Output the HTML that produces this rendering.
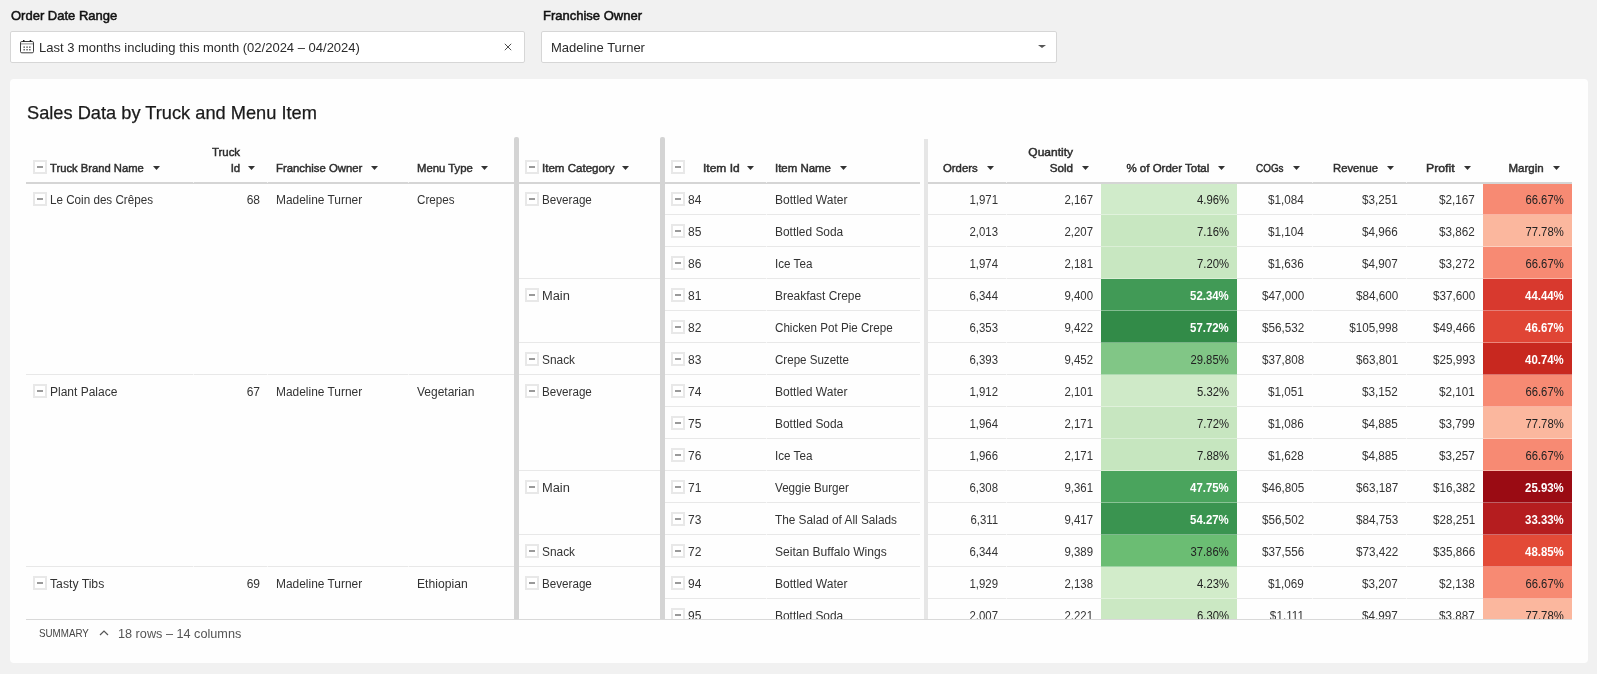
<!DOCTYPE html><html><head><meta charset="utf-8"><style>
*{box-sizing:border-box}
html,body{margin:0;padding:0}
body{width:1597px;height:674px;overflow:hidden;background:#f1f1f1;position:relative;font-family:"Liberation Sans",sans-serif;color:#333}
.a{position:absolute;white-space:nowrap}
.lbl{font-size:13px;font-weight:400;color:#111;-webkit-text-stroke:0.5px #111;line-height:16px}
.inp{position:absolute;background:#fff;border:1px solid #d6d6d6;border-radius:2px}
.card{position:absolute;left:10px;top:79px;width:1578px;height:584px;background:#fefefe;border-radius:4px}
.title{font-size:19px;transform:scaleX(0.96);transform-origin:0 0;color:#1a1a1a;-webkit-text-stroke:0.25px #1a1a1a;line-height:20px}
.hd{font-size:11px;font-weight:400;color:#2e2e2e;-webkit-text-stroke:0.45px #2e2e2e;line-height:14px}
.td{font-size:12px;color:#333;line-height:14px}
.num{transform-origin:100% 50%}
.bx{position:absolute;width:14px;height:14px;border:2px solid #e8e8e8;background:#fff}
.bx:after{content:"";position:absolute;left:2px;top:4px;width:6px;height:2px;background:#9a9a9a}
.arr{position:absolute;width:0;height:0;border-left:3.5px solid transparent;border-right:3.5px solid transparent;border-top:4px solid #333}
.ln{position:absolute;height:1px;background:#e8e8e8}
.cl{position:absolute}
</style></head><body><div id="w" style="position:absolute;left:0;top:0;width:1597px;height:674px;will-change:transform">
<div class="a lbl" style="left:11px;top:8px;">Order Date Range</div>
<div class="inp" style="left:10px;top:31px;width:515px;height:32px"></div>
<svg class="a" style="left:20px;top:40px" width="14" height="14" viewBox="0 0 14 14"><rect x="0.5" y="1.5" width="13" height="11.3" rx="1.3" fill="none" stroke="#333" stroke-width="0.95"/><rect x="1" y="3" width="12" height="1.6" fill="#b8b8b8"/><rect x="3" y="0" width="1.5" height="2" fill="#222"/><rect x="9.7" y="0" width="1.5" height="2" fill="#222"/><rect x="3.5" y="6.5" width="1.3" height="1.3" fill="#333"/><rect x="6.4" y="6.5" width="1.3" height="1.3" fill="#333"/><rect x="9.2" y="6.5" width="1.3" height="1.3" fill="#333"/><rect x="3.5" y="9.1" width="1.3" height="1.3" fill="#333"/><rect x="6.4" y="9.1" width="1.3" height="1.3" fill="#333"/><rect x="9.2" y="9.1" width="1.3" height="1.3" fill="#333"/></svg>
<div class="a" style="left:39px;top:40px;font-size:13px;line-height:15px;color:#2b2b2b">Last 3 months including this month (02/2024 – 04/2024)</div>
<svg class="a" style="left:504px;top:43px" width="8" height="8" viewBox="0 0 8 8"><path d="M0.8 0.8L7.2 7.2M7.2 0.8L0.8 7.2" stroke="#444" stroke-width="0.95"/></svg>
<div class="a lbl" style="left:543px;top:8px;">Franchise Owner</div>
<div class="inp" style="left:541px;top:31px;width:516px;height:32px"></div>
<div class="a" style="left:551px;top:40px;font-size:13px;line-height:15px;color:#2b2b2b">Madeline Turner</div>
<div class="arr" style="left:1038px;top:45px;border-left-width:4px;border-right-width:4px;border-top-width:3.5px;border-top-color:#555"></div>
<div class="card"></div>
<div class="a title" style="left:27px;top:103px">Sales Data by Truck and Menu Item</div>
<div class="bx" style="left:33px;top:160px"></div>
<div class="bx" style="left:525px;top:160px"></div>
<div class="bx" style="left:671px;top:160px"></div>
<div class="a hd" style="left:50px;top:161px;transform:scaleX(1.02);transform-origin:0 50%;">Truck Brand Name</div>
<svg class="a" style="left:153px;top:166px" width="7" height="4"><path d="M0 0H7L3.5 4Z" fill="#333"/></svg>
<div class="a hd" style="right:1357px;top:145px;transform:scaleX(1.04);transform-origin:100% 50%;">Truck</div>
<div class="a hd" style="right:1357px;top:161px;transform:scaleX(1.04);transform-origin:100% 50%;">Id</div>
<svg class="a" style="left:248px;top:166px" width="7" height="4"><path d="M0 0H7L3.5 4Z" fill="#333"/></svg>
<div class="a hd" style="left:276px;top:161px;transform:scaleX(1.03);transform-origin:0 50%;">Franchise Owner</div>
<svg class="a" style="left:371px;top:166px" width="7" height="4"><path d="M0 0H7L3.5 4Z" fill="#333"/></svg>
<div class="a hd" style="left:417px;top:161px;transform:scaleX(1.03);transform-origin:0 50%;">Menu Type</div>
<svg class="a" style="left:481px;top:166px" width="7" height="4"><path d="M0 0H7L3.5 4Z" fill="#333"/></svg>
<div class="a hd" style="left:542px;top:161px;transform:scaleX(1.05);transform-origin:0 50%;">Item Category</div>
<svg class="a" style="left:622px;top:166px" width="7" height="4"><path d="M0 0H7L3.5 4Z" fill="#333"/></svg>
<div class="a hd" style="left:703px;top:161px;transform:scaleX(1.09);transform-origin:0 50%;">Item Id</div>
<svg class="a" style="left:747px;top:166px" width="7" height="4"><path d="M0 0H7L3.5 4Z" fill="#333"/></svg>
<div class="a hd" style="left:775px;top:161px;transform:scaleX(1.04);transform-origin:0 50%;">Item Name</div>
<svg class="a" style="left:840px;top:166px" width="7" height="4"><path d="M0 0H7L3.5 4Z" fill="#333"/></svg>
<div class="a hd" style="right:619px;top:161px;transform:scaleX(1.03);transform-origin:100% 50%;">Orders</div>
<svg class="a" style="left:987px;top:166px" width="7" height="4"><path d="M0 0H7L3.5 4Z" fill="#333"/></svg>
<div class="a hd" style="right:524px;top:161px;transform:scaleX(1.06);transform-origin:100% 50%;">Sold</div>
<div class="a hd" style="right:524px;top:145px;transform:scaleX(1.09);transform-origin:100% 50%;">Quantity</div>
<svg class="a" style="left:1082px;top:166px" width="7" height="4"><path d="M0 0H7L3.5 4Z" fill="#333"/></svg>
<div class="a hd" style="right:388px;top:161px;transform:scaleX(1.045);transform-origin:100% 50%;">% of Order Total</div>
<svg class="a" style="left:1218px;top:166px" width="7" height="4"><path d="M0 0H7L3.5 4Z" fill="#333"/></svg>
<div class="a hd" style="right:313px;top:161px;transform:scaleX(0.9);transform-origin:100% 50%;">COGs</div>
<svg class="a" style="left:1293px;top:166px" width="7" height="4"><path d="M0 0H7L3.5 4Z" fill="#333"/></svg>
<div class="a hd" style="right:219px;top:161px;transform:scaleX(1.02);transform-origin:100% 50%;">Revenue</div>
<svg class="a" style="left:1387px;top:166px" width="7" height="4"><path d="M0 0H7L3.5 4Z" fill="#333"/></svg>
<div class="a hd" style="right:142px;top:161px;transform:scaleX(1.12);transform-origin:100% 50%;">Profit</div>
<svg class="a" style="left:1464px;top:166px" width="7" height="4"><path d="M0 0H7L3.5 4Z" fill="#333"/></svg>
<div class="a hd" style="right:53px;top:161px;transform:scaleX(1.045);transform-origin:100% 50%;">Margin</div>
<svg class="a" style="left:1553px;top:166px" width="7" height="4"><path d="M0 0H7L3.5 4Z" fill="#333"/></svg>
<div class="a" style="left:26px;top:182px;width:894px;height:2px;background:#d5d5d5"></div>
<div class="a" style="left:928px;top:182px;width:644px;height:2px;background:#d5d5d5"></div>
<div class="a" style="left:193px;top:182px;width:1px;height:1px;background:#efefef"></div>
<div class="a" style="left:267px;top:182px;width:1px;height:1px;background:#efefef"></div>
<div class="a" style="left:408px;top:182px;width:1px;height:1px;background:#efefef"></div>
<div class="a" style="left:766px;top:182px;width:1px;height:1px;background:#efefef"></div>
<div class="a" style="left:1006px;top:182px;width:1px;height:1px;background:#efefef"></div>
<div class="a" style="left:1312px;top:182px;width:1px;height:1px;background:#efefef"></div>
<div class="a" style="left:1406px;top:182px;width:1px;height:1px;background:#efefef"></div>
<div class="a" style="left:0;top:184px;width:1597px;height:435px;overflow:hidden">
<div class="cl" style="left:1101px;top:-1px;width:136px;height:32px;background:#d0ebca"></div>
<div class="cl" style="left:1483px;top:-1px;width:89px;height:32px;background:#f78a73"></div>
<div class="cl" style="left:1101px;top:31px;width:136px;height:32px;background:#c8e7c1"></div>
<div class="cl" style="left:1483px;top:31px;width:89px;height:32px;background:#fbb79e"></div>
<div class="cl" style="left:1101px;top:63px;width:136px;height:32px;background:#c8e7c1"></div>
<div class="cl" style="left:1483px;top:63px;width:89px;height:32px;background:#f78a73"></div>
<div class="cl" style="left:1101px;top:95px;width:136px;height:32px;background:#419a56"></div>
<div class="cl" style="left:1483px;top:95px;width:89px;height:32px;background:#d8392e"></div>
<div class="cl" style="left:1101px;top:127px;width:136px;height:32px;background:#328b48"></div>
<div class="cl" style="left:1483px;top:127px;width:89px;height:32px;background:#e04535"></div>
<div class="cl" style="left:1101px;top:159px;width:136px;height:32px;background:#81c686"></div>
<div class="cl" style="left:1483px;top:159px;width:89px;height:32px;background:#c8281f"></div>
<div class="cl" style="left:1101px;top:191px;width:136px;height:32px;background:#cfeac8"></div>
<div class="cl" style="left:1483px;top:191px;width:89px;height:32px;background:#f78a73"></div>
<div class="cl" style="left:1101px;top:223px;width:136px;height:32px;background:#c7e6c0"></div>
<div class="cl" style="left:1483px;top:223px;width:89px;height:32px;background:#fbb79e"></div>
<div class="cl" style="left:1101px;top:255px;width:136px;height:32px;background:#c6e6bf"></div>
<div class="cl" style="left:1483px;top:255px;width:89px;height:32px;background:#f78a73"></div>
<div class="cl" style="left:1101px;top:287px;width:136px;height:32px;background:#4aa45d"></div>
<div class="cl" style="left:1483px;top:287px;width:89px;height:32px;background:#9a0b13"></div>
<div class="cl" style="left:1101px;top:319px;width:136px;height:32px;background:#3a9450"></div>
<div class="cl" style="left:1483px;top:319px;width:89px;height:32px;background:#b51d1f"></div>
<div class="cl" style="left:1101px;top:351px;width:136px;height:32px;background:#6bbd73"></div>
<div class="cl" style="left:1483px;top:351px;width:89px;height:32px;background:#e34a37"></div>
<div class="cl" style="left:1101px;top:383px;width:136px;height:32px;background:#d2ecca"></div>
<div class="cl" style="left:1483px;top:383px;width:89px;height:32px;background:#f78a73"></div>
<div class="cl" style="left:1101px;top:415px;width:136px;height:32px;background:#cbe8c3"></div>
<div class="cl" style="left:1483px;top:415px;width:89px;height:32px;background:#fbb79e"></div>
<div class="ln" style="left:664px;top:30px;width:256px"></div>
<div class="ln" style="left:928px;top:30px;width:173px"></div>
<div class="ln" style="left:1101px;top:30px;width:136px;background:rgba(255,255,255,.35)"></div>
<div class="ln" style="left:1237px;top:30px;width:246px"></div>
<div class="ln" style="left:1483px;top:30px;width:89px;background:rgba(255,255,255,.35)"></div>
<div class="ln" style="left:664px;top:62px;width:256px"></div>
<div class="ln" style="left:928px;top:62px;width:173px"></div>
<div class="ln" style="left:1101px;top:62px;width:136px;background:rgba(255,255,255,.35)"></div>
<div class="ln" style="left:1237px;top:62px;width:246px"></div>
<div class="ln" style="left:1483px;top:62px;width:89px;background:rgba(255,255,255,.35)"></div>
<div class="ln" style="left:664px;top:94px;width:256px"></div>
<div class="ln" style="left:928px;top:94px;width:173px"></div>
<div class="ln" style="left:1101px;top:94px;width:136px;background:rgba(255,255,255,.35)"></div>
<div class="ln" style="left:1237px;top:94px;width:246px"></div>
<div class="ln" style="left:1483px;top:94px;width:89px;background:rgba(255,255,255,.35)"></div>
<div class="ln" style="left:664px;top:126px;width:256px"></div>
<div class="ln" style="left:928px;top:126px;width:173px"></div>
<div class="ln" style="left:1101px;top:126px;width:136px;background:rgba(255,255,255,.35)"></div>
<div class="ln" style="left:1237px;top:126px;width:246px"></div>
<div class="ln" style="left:1483px;top:126px;width:89px;background:rgba(255,255,255,.35)"></div>
<div class="ln" style="left:664px;top:158px;width:256px"></div>
<div class="ln" style="left:928px;top:158px;width:173px"></div>
<div class="ln" style="left:1101px;top:158px;width:136px;background:rgba(255,255,255,.35)"></div>
<div class="ln" style="left:1237px;top:158px;width:246px"></div>
<div class="ln" style="left:1483px;top:158px;width:89px;background:rgba(255,255,255,.35)"></div>
<div class="ln" style="left:664px;top:190px;width:256px"></div>
<div class="ln" style="left:928px;top:190px;width:173px"></div>
<div class="ln" style="left:1101px;top:190px;width:136px;background:rgba(255,255,255,.35)"></div>
<div class="ln" style="left:1237px;top:190px;width:246px"></div>
<div class="ln" style="left:1483px;top:190px;width:89px;background:rgba(255,255,255,.35)"></div>
<div class="ln" style="left:664px;top:222px;width:256px"></div>
<div class="ln" style="left:928px;top:222px;width:173px"></div>
<div class="ln" style="left:1101px;top:222px;width:136px;background:rgba(255,255,255,.35)"></div>
<div class="ln" style="left:1237px;top:222px;width:246px"></div>
<div class="ln" style="left:1483px;top:222px;width:89px;background:rgba(255,255,255,.35)"></div>
<div class="ln" style="left:664px;top:254px;width:256px"></div>
<div class="ln" style="left:928px;top:254px;width:173px"></div>
<div class="ln" style="left:1101px;top:254px;width:136px;background:rgba(255,255,255,.35)"></div>
<div class="ln" style="left:1237px;top:254px;width:246px"></div>
<div class="ln" style="left:1483px;top:254px;width:89px;background:rgba(255,255,255,.35)"></div>
<div class="ln" style="left:664px;top:286px;width:256px"></div>
<div class="ln" style="left:928px;top:286px;width:173px"></div>
<div class="ln" style="left:1101px;top:286px;width:136px;background:rgba(255,255,255,.35)"></div>
<div class="ln" style="left:1237px;top:286px;width:246px"></div>
<div class="ln" style="left:1483px;top:286px;width:89px;background:rgba(255,255,255,.35)"></div>
<div class="ln" style="left:664px;top:318px;width:256px"></div>
<div class="ln" style="left:928px;top:318px;width:173px"></div>
<div class="ln" style="left:1101px;top:318px;width:136px;background:rgba(255,255,255,.35)"></div>
<div class="ln" style="left:1237px;top:318px;width:246px"></div>
<div class="ln" style="left:1483px;top:318px;width:89px;background:rgba(255,255,255,.35)"></div>
<div class="ln" style="left:664px;top:350px;width:256px"></div>
<div class="ln" style="left:928px;top:350px;width:173px"></div>
<div class="ln" style="left:1101px;top:350px;width:136px;background:rgba(255,255,255,.35)"></div>
<div class="ln" style="left:1237px;top:350px;width:246px"></div>
<div class="ln" style="left:1483px;top:350px;width:89px;background:rgba(255,255,255,.35)"></div>
<div class="ln" style="left:664px;top:382px;width:256px"></div>
<div class="ln" style="left:928px;top:382px;width:173px"></div>
<div class="ln" style="left:1101px;top:382px;width:136px;background:rgba(255,255,255,.35)"></div>
<div class="ln" style="left:1237px;top:382px;width:246px"></div>
<div class="ln" style="left:1483px;top:382px;width:89px;background:rgba(255,255,255,.35)"></div>
<div class="ln" style="left:664px;top:414px;width:256px"></div>
<div class="ln" style="left:928px;top:414px;width:173px"></div>
<div class="ln" style="left:1101px;top:414px;width:136px;background:rgba(255,255,255,.35)"></div>
<div class="ln" style="left:1237px;top:414px;width:246px"></div>
<div class="ln" style="left:1483px;top:414px;width:89px;background:rgba(255,255,255,.35)"></div>
<div class="ln" style="left:766px;top:30px;width:1px;background:#f6f6f6"></div>
<div class="ln" style="left:1006px;top:30px;width:1px;background:#f6f6f6"></div>
<div class="ln" style="left:1312px;top:30px;width:1px;background:#f6f6f6"></div>
<div class="ln" style="left:1406px;top:30px;width:1px;background:#f6f6f6"></div>
<div class="ln" style="left:766px;top:62px;width:1px;background:#f6f6f6"></div>
<div class="ln" style="left:1006px;top:62px;width:1px;background:#f6f6f6"></div>
<div class="ln" style="left:1312px;top:62px;width:1px;background:#f6f6f6"></div>
<div class="ln" style="left:1406px;top:62px;width:1px;background:#f6f6f6"></div>
<div class="ln" style="left:766px;top:94px;width:1px;background:#f6f6f6"></div>
<div class="ln" style="left:1006px;top:94px;width:1px;background:#f6f6f6"></div>
<div class="ln" style="left:1312px;top:94px;width:1px;background:#f6f6f6"></div>
<div class="ln" style="left:1406px;top:94px;width:1px;background:#f6f6f6"></div>
<div class="ln" style="left:766px;top:126px;width:1px;background:#f6f6f6"></div>
<div class="ln" style="left:1006px;top:126px;width:1px;background:#f6f6f6"></div>
<div class="ln" style="left:1312px;top:126px;width:1px;background:#f6f6f6"></div>
<div class="ln" style="left:1406px;top:126px;width:1px;background:#f6f6f6"></div>
<div class="ln" style="left:766px;top:158px;width:1px;background:#f6f6f6"></div>
<div class="ln" style="left:1006px;top:158px;width:1px;background:#f6f6f6"></div>
<div class="ln" style="left:1312px;top:158px;width:1px;background:#f6f6f6"></div>
<div class="ln" style="left:1406px;top:158px;width:1px;background:#f6f6f6"></div>
<div class="ln" style="left:766px;top:190px;width:1px;background:#f6f6f6"></div>
<div class="ln" style="left:1006px;top:190px;width:1px;background:#f6f6f6"></div>
<div class="ln" style="left:1312px;top:190px;width:1px;background:#f6f6f6"></div>
<div class="ln" style="left:1406px;top:190px;width:1px;background:#f6f6f6"></div>
<div class="ln" style="left:766px;top:222px;width:1px;background:#f6f6f6"></div>
<div class="ln" style="left:1006px;top:222px;width:1px;background:#f6f6f6"></div>
<div class="ln" style="left:1312px;top:222px;width:1px;background:#f6f6f6"></div>
<div class="ln" style="left:1406px;top:222px;width:1px;background:#f6f6f6"></div>
<div class="ln" style="left:766px;top:254px;width:1px;background:#f6f6f6"></div>
<div class="ln" style="left:1006px;top:254px;width:1px;background:#f6f6f6"></div>
<div class="ln" style="left:1312px;top:254px;width:1px;background:#f6f6f6"></div>
<div class="ln" style="left:1406px;top:254px;width:1px;background:#f6f6f6"></div>
<div class="ln" style="left:766px;top:286px;width:1px;background:#f6f6f6"></div>
<div class="ln" style="left:1006px;top:286px;width:1px;background:#f6f6f6"></div>
<div class="ln" style="left:1312px;top:286px;width:1px;background:#f6f6f6"></div>
<div class="ln" style="left:1406px;top:286px;width:1px;background:#f6f6f6"></div>
<div class="ln" style="left:766px;top:318px;width:1px;background:#f6f6f6"></div>
<div class="ln" style="left:1006px;top:318px;width:1px;background:#f6f6f6"></div>
<div class="ln" style="left:1312px;top:318px;width:1px;background:#f6f6f6"></div>
<div class="ln" style="left:1406px;top:318px;width:1px;background:#f6f6f6"></div>
<div class="ln" style="left:766px;top:350px;width:1px;background:#f6f6f6"></div>
<div class="ln" style="left:1006px;top:350px;width:1px;background:#f6f6f6"></div>
<div class="ln" style="left:1312px;top:350px;width:1px;background:#f6f6f6"></div>
<div class="ln" style="left:1406px;top:350px;width:1px;background:#f6f6f6"></div>
<div class="ln" style="left:766px;top:382px;width:1px;background:#f6f6f6"></div>
<div class="ln" style="left:1006px;top:382px;width:1px;background:#f6f6f6"></div>
<div class="ln" style="left:1312px;top:382px;width:1px;background:#f6f6f6"></div>
<div class="ln" style="left:1406px;top:382px;width:1px;background:#f6f6f6"></div>
<div class="ln" style="left:766px;top:414px;width:1px;background:#f6f6f6"></div>
<div class="ln" style="left:1006px;top:414px;width:1px;background:#f6f6f6"></div>
<div class="ln" style="left:1312px;top:414px;width:1px;background:#f6f6f6"></div>
<div class="ln" style="left:1406px;top:414px;width:1px;background:#f6f6f6"></div>
<div class="ln" style="left:26px;top:190px;width:488px"></div>
<div class="ln" style="left:193px;top:190px;width:1px;background:#f6f6f6"></div>
<div class="ln" style="left:267px;top:190px;width:1px;background:#f6f6f6"></div>
<div class="ln" style="left:408px;top:190px;width:1px;background:#f6f6f6"></div>
<div class="ln" style="left:26px;top:382px;width:488px"></div>
<div class="ln" style="left:193px;top:382px;width:1px;background:#f6f6f6"></div>
<div class="ln" style="left:267px;top:382px;width:1px;background:#f6f6f6"></div>
<div class="ln" style="left:408px;top:382px;width:1px;background:#f6f6f6"></div>
<div class="ln" style="left:518px;top:94px;width:142px"></div>
<div class="ln" style="left:518px;top:158px;width:142px"></div>
<div class="ln" style="left:518px;top:190px;width:142px"></div>
<div class="ln" style="left:518px;top:286px;width:142px"></div>
<div class="ln" style="left:518px;top:350px;width:142px"></div>
<div class="ln" style="left:518px;top:382px;width:142px"></div>
<div class="bx" style="left:33px;top:8px"></div>
<div class="a td" style="left:50px;top:8.5px;transform:scaleX(0.971);transform-origin:0 50%;">Le Coin des Crêpes</div>
<div class="a td" style="right:1337px;top:8.5px;">68</div>
<div class="a td" style="left:276px;top:8.5px;transform:scaleX(0.994);transform-origin:0 50%;">Madeline Turner</div>
<div class="a td" style="left:417px;top:8.5px;transform:scaleX(0.968);transform-origin:0 50%;">Crepes</div>
<div class="bx" style="left:525px;top:8px"></div>
<div class="a td" style="left:542px;top:8.5px;transform:scaleX(0.97);transform-origin:0 50%;">Beverage</div>
<div class="bx" style="left:671px;top:8px"></div>
<div class="a td" style="left:688px;top:8.5px;">84</div>
<div class="a td" style="left:775px;top:8.5px;transform:scaleX(1.004);transform-origin:0 50%;">Bottled Water</div>
<div class="a td" style="right:599px;top:8.5px;transform:scaleX(0.95);transform-origin:100% 50%;">1,971</div>
<div class="a td" style="right:504px;top:8.5px;transform:scaleX(0.95);transform-origin:100% 50%;">2,167</div>
<div class="a td" style="right:368px;top:8.5px;color:#222;transform:scaleX(0.94);transform-origin:100% 50%;">4.96%</div>
<div class="a td" style="right:293px;top:8.5px;transform:scaleX(0.975);transform-origin:100% 50%;">$1,084</div>
<div class="a td" style="right:199px;top:8.5px;transform:scaleX(0.975);transform-origin:100% 50%;">$3,251</div>
<div class="a td" style="right:122px;top:8.5px;transform:scaleX(0.975);transform-origin:100% 50%;">$2,167</div>
<div class="a td" style="right:33px;top:8.5px;color:#222;transform:scaleX(0.94);transform-origin:100% 50%;">66.67%</div>
<div class="bx" style="left:671px;top:40px"></div>
<div class="a td" style="left:688px;top:40.5px;">85</div>
<div class="a td" style="left:775px;top:40.5px;transform:scaleX(0.993);transform-origin:0 50%;">Bottled Soda</div>
<div class="a td" style="right:599px;top:40.5px;transform:scaleX(0.95);transform-origin:100% 50%;">2,013</div>
<div class="a td" style="right:504px;top:40.5px;transform:scaleX(0.95);transform-origin:100% 50%;">2,207</div>
<div class="a td" style="right:368px;top:40.5px;color:#222;transform:scaleX(0.94);transform-origin:100% 50%;">7.16%</div>
<div class="a td" style="right:293px;top:40.5px;transform:scaleX(0.975);transform-origin:100% 50%;">$1,104</div>
<div class="a td" style="right:199px;top:40.5px;transform:scaleX(0.975);transform-origin:100% 50%;">$4,966</div>
<div class="a td" style="right:122px;top:40.5px;transform:scaleX(0.975);transform-origin:100% 50%;">$3,862</div>
<div class="a td" style="right:33px;top:40.5px;color:#222;transform:scaleX(0.94);transform-origin:100% 50%;">77.78%</div>
<div class="bx" style="left:671px;top:72px"></div>
<div class="a td" style="left:688px;top:72.5px;">86</div>
<div class="a td" style="left:775px;top:72.5px;transform:scaleX(0.971);transform-origin:0 50%;">Ice Tea</div>
<div class="a td" style="right:599px;top:72.5px;transform:scaleX(0.95);transform-origin:100% 50%;">1,974</div>
<div class="a td" style="right:504px;top:72.5px;transform:scaleX(0.95);transform-origin:100% 50%;">2,181</div>
<div class="a td" style="right:368px;top:72.5px;color:#222;transform:scaleX(0.94);transform-origin:100% 50%;">7.20%</div>
<div class="a td" style="right:293px;top:72.5px;transform:scaleX(0.975);transform-origin:100% 50%;">$1,636</div>
<div class="a td" style="right:199px;top:72.5px;transform:scaleX(0.975);transform-origin:100% 50%;">$4,907</div>
<div class="a td" style="right:122px;top:72.5px;transform:scaleX(0.975);transform-origin:100% 50%;">$3,272</div>
<div class="a td" style="right:33px;top:72.5px;color:#222;transform:scaleX(0.94);transform-origin:100% 50%;">66.67%</div>
<div class="bx" style="left:525px;top:104px"></div>
<div class="a td" style="left:542px;top:104.5px;transform:scaleX(1.071);transform-origin:0 50%;">Main</div>
<div class="bx" style="left:671px;top:104px"></div>
<div class="a td" style="left:688px;top:104.5px;">81</div>
<div class="a td" style="left:775px;top:104.5px;transform:scaleX(0.993);transform-origin:0 50%;">Breakfast Crepe</div>
<div class="a td" style="right:599px;top:104.5px;transform:scaleX(0.95);transform-origin:100% 50%;">6,344</div>
<div class="a td" style="right:504px;top:104.5px;transform:scaleX(0.95);transform-origin:100% 50%;">9,400</div>
<div class="a td" style="right:368px;top:104.5px;color:#fff;font-weight:700;transform:scaleX(0.95);transform-origin:100% 50%;">52.34%</div>
<div class="a td" style="right:293px;top:104.5px;transform:scaleX(0.975);transform-origin:100% 50%;">$47,000</div>
<div class="a td" style="right:199px;top:104.5px;transform:scaleX(0.975);transform-origin:100% 50%;">$84,600</div>
<div class="a td" style="right:122px;top:104.5px;transform:scaleX(0.975);transform-origin:100% 50%;">$37,600</div>
<div class="a td" style="right:33px;top:104.5px;color:#fff;font-weight:700;transform:scaleX(0.95);transform-origin:100% 50%;">44.44%</div>
<div class="bx" style="left:671px;top:136px"></div>
<div class="a td" style="left:688px;top:136.5px;">82</div>
<div class="a td" style="left:775px;top:136.5px;transform:scaleX(0.969);transform-origin:0 50%;">Chicken Pot Pie Crepe</div>
<div class="a td" style="right:599px;top:136.5px;transform:scaleX(0.95);transform-origin:100% 50%;">6,353</div>
<div class="a td" style="right:504px;top:136.5px;transform:scaleX(0.95);transform-origin:100% 50%;">9,422</div>
<div class="a td" style="right:368px;top:136.5px;color:#fff;font-weight:700;transform:scaleX(0.95);transform-origin:100% 50%;">57.72%</div>
<div class="a td" style="right:293px;top:136.5px;transform:scaleX(0.975);transform-origin:100% 50%;">$56,532</div>
<div class="a td" style="right:199px;top:136.5px;transform:scaleX(0.975);transform-origin:100% 50%;">$105,998</div>
<div class="a td" style="right:122px;top:136.5px;transform:scaleX(0.975);transform-origin:100% 50%;">$49,466</div>
<div class="a td" style="right:33px;top:136.5px;color:#fff;font-weight:700;transform:scaleX(0.95);transform-origin:100% 50%;">46.67%</div>
<div class="bx" style="left:525px;top:168px"></div>
<div class="a td" style="left:542px;top:168.5px;transform:scaleX(0.991);transform-origin:0 50%;">Snack</div>
<div class="bx" style="left:671px;top:168px"></div>
<div class="a td" style="left:688px;top:168.5px;">83</div>
<div class="a td" style="left:775px;top:168.5px;transform:scaleX(0.964);transform-origin:0 50%;">Crepe Suzette</div>
<div class="a td" style="right:599px;top:168.5px;transform:scaleX(0.95);transform-origin:100% 50%;">6,393</div>
<div class="a td" style="right:504px;top:168.5px;transform:scaleX(0.95);transform-origin:100% 50%;">9,452</div>
<div class="a td" style="right:368px;top:168.5px;color:#222;transform:scaleX(0.94);transform-origin:100% 50%;">29.85%</div>
<div class="a td" style="right:293px;top:168.5px;transform:scaleX(0.975);transform-origin:100% 50%;">$37,808</div>
<div class="a td" style="right:199px;top:168.5px;transform:scaleX(0.975);transform-origin:100% 50%;">$63,801</div>
<div class="a td" style="right:122px;top:168.5px;transform:scaleX(0.975);transform-origin:100% 50%;">$25,993</div>
<div class="a td" style="right:33px;top:168.5px;color:#fff;font-weight:700;transform:scaleX(0.95);transform-origin:100% 50%;">40.74%</div>
<div class="bx" style="left:33px;top:200px"></div>
<div class="a td" style="left:50px;top:200.5px;transform:scaleX(1.0);transform-origin:0 50%;">Plant Palace</div>
<div class="a td" style="right:1337px;top:200.5px;">67</div>
<div class="a td" style="left:276px;top:200.5px;transform:scaleX(0.994);transform-origin:0 50%;">Madeline Turner</div>
<div class="a td" style="left:417px;top:200.5px;transform:scaleX(1.0);transform-origin:0 50%;">Vegetarian</div>
<div class="bx" style="left:525px;top:200px"></div>
<div class="a td" style="left:542px;top:200.5px;transform:scaleX(0.97);transform-origin:0 50%;">Beverage</div>
<div class="bx" style="left:671px;top:200px"></div>
<div class="a td" style="left:688px;top:200.5px;">74</div>
<div class="a td" style="left:775px;top:200.5px;transform:scaleX(1.004);transform-origin:0 50%;">Bottled Water</div>
<div class="a td" style="right:599px;top:200.5px;transform:scaleX(0.95);transform-origin:100% 50%;">1,912</div>
<div class="a td" style="right:504px;top:200.5px;transform:scaleX(0.95);transform-origin:100% 50%;">2,101</div>
<div class="a td" style="right:368px;top:200.5px;color:#222;transform:scaleX(0.94);transform-origin:100% 50%;">5.32%</div>
<div class="a td" style="right:293px;top:200.5px;transform:scaleX(0.975);transform-origin:100% 50%;">$1,051</div>
<div class="a td" style="right:199px;top:200.5px;transform:scaleX(0.975);transform-origin:100% 50%;">$3,152</div>
<div class="a td" style="right:122px;top:200.5px;transform:scaleX(0.975);transform-origin:100% 50%;">$2,101</div>
<div class="a td" style="right:33px;top:200.5px;color:#222;transform:scaleX(0.94);transform-origin:100% 50%;">66.67%</div>
<div class="bx" style="left:671px;top:232px"></div>
<div class="a td" style="left:688px;top:232.5px;">75</div>
<div class="a td" style="left:775px;top:232.5px;transform:scaleX(0.993);transform-origin:0 50%;">Bottled Soda</div>
<div class="a td" style="right:599px;top:232.5px;transform:scaleX(0.95);transform-origin:100% 50%;">1,964</div>
<div class="a td" style="right:504px;top:232.5px;transform:scaleX(0.95);transform-origin:100% 50%;">2,171</div>
<div class="a td" style="right:368px;top:232.5px;color:#222;transform:scaleX(0.94);transform-origin:100% 50%;">7.72%</div>
<div class="a td" style="right:293px;top:232.5px;transform:scaleX(0.975);transform-origin:100% 50%;">$1,086</div>
<div class="a td" style="right:199px;top:232.5px;transform:scaleX(0.975);transform-origin:100% 50%;">$4,885</div>
<div class="a td" style="right:122px;top:232.5px;transform:scaleX(0.975);transform-origin:100% 50%;">$3,799</div>
<div class="a td" style="right:33px;top:232.5px;color:#222;transform:scaleX(0.94);transform-origin:100% 50%;">77.78%</div>
<div class="bx" style="left:671px;top:264px"></div>
<div class="a td" style="left:688px;top:264.5px;">76</div>
<div class="a td" style="left:775px;top:264.5px;transform:scaleX(0.971);transform-origin:0 50%;">Ice Tea</div>
<div class="a td" style="right:599px;top:264.5px;transform:scaleX(0.95);transform-origin:100% 50%;">1,966</div>
<div class="a td" style="right:504px;top:264.5px;transform:scaleX(0.95);transform-origin:100% 50%;">2,171</div>
<div class="a td" style="right:368px;top:264.5px;color:#222;transform:scaleX(0.94);transform-origin:100% 50%;">7.88%</div>
<div class="a td" style="right:293px;top:264.5px;transform:scaleX(0.975);transform-origin:100% 50%;">$1,628</div>
<div class="a td" style="right:199px;top:264.5px;transform:scaleX(0.975);transform-origin:100% 50%;">$4,885</div>
<div class="a td" style="right:122px;top:264.5px;transform:scaleX(0.975);transform-origin:100% 50%;">$3,257</div>
<div class="a td" style="right:33px;top:264.5px;color:#222;transform:scaleX(0.94);transform-origin:100% 50%;">66.67%</div>
<div class="bx" style="left:525px;top:296px"></div>
<div class="a td" style="left:542px;top:296.5px;transform:scaleX(1.071);transform-origin:0 50%;">Main</div>
<div class="bx" style="left:671px;top:296px"></div>
<div class="a td" style="left:688px;top:296.5px;">71</div>
<div class="a td" style="left:775px;top:296.5px;transform:scaleX(0.972);transform-origin:0 50%;">Veggie Burger</div>
<div class="a td" style="right:599px;top:296.5px;transform:scaleX(0.95);transform-origin:100% 50%;">6,308</div>
<div class="a td" style="right:504px;top:296.5px;transform:scaleX(0.95);transform-origin:100% 50%;">9,361</div>
<div class="a td" style="right:368px;top:296.5px;color:#fff;font-weight:700;transform:scaleX(0.95);transform-origin:100% 50%;">47.75%</div>
<div class="a td" style="right:293px;top:296.5px;transform:scaleX(0.975);transform-origin:100% 50%;">$46,805</div>
<div class="a td" style="right:199px;top:296.5px;transform:scaleX(0.975);transform-origin:100% 50%;">$63,187</div>
<div class="a td" style="right:122px;top:296.5px;transform:scaleX(0.975);transform-origin:100% 50%;">$16,382</div>
<div class="a td" style="right:33px;top:296.5px;color:#fff;font-weight:700;transform:scaleX(0.95);transform-origin:100% 50%;">25.93%</div>
<div class="bx" style="left:671px;top:328px"></div>
<div class="a td" style="left:688px;top:328.5px;">73</div>
<div class="a td" style="left:775px;top:328.5px;transform:scaleX(0.983);transform-origin:0 50%;">The Salad of All Salads</div>
<div class="a td" style="right:599px;top:328.5px;transform:scaleX(0.95);transform-origin:100% 50%;">6,311</div>
<div class="a td" style="right:504px;top:328.5px;transform:scaleX(0.95);transform-origin:100% 50%;">9,417</div>
<div class="a td" style="right:368px;top:328.5px;color:#fff;font-weight:700;transform:scaleX(0.95);transform-origin:100% 50%;">54.27%</div>
<div class="a td" style="right:293px;top:328.5px;transform:scaleX(0.975);transform-origin:100% 50%;">$56,502</div>
<div class="a td" style="right:199px;top:328.5px;transform:scaleX(0.975);transform-origin:100% 50%;">$84,753</div>
<div class="a td" style="right:122px;top:328.5px;transform:scaleX(0.975);transform-origin:100% 50%;">$28,251</div>
<div class="a td" style="right:33px;top:328.5px;color:#fff;font-weight:700;transform:scaleX(0.95);transform-origin:100% 50%;">33.33%</div>
<div class="bx" style="left:525px;top:360px"></div>
<div class="a td" style="left:542px;top:360.5px;transform:scaleX(0.991);transform-origin:0 50%;">Snack</div>
<div class="bx" style="left:671px;top:360px"></div>
<div class="a td" style="left:688px;top:360.5px;">72</div>
<div class="a td" style="left:775px;top:360.5px;transform:scaleX(1.005);transform-origin:0 50%;">Seitan Buffalo Wings</div>
<div class="a td" style="right:599px;top:360.5px;transform:scaleX(0.95);transform-origin:100% 50%;">6,344</div>
<div class="a td" style="right:504px;top:360.5px;transform:scaleX(0.95);transform-origin:100% 50%;">9,389</div>
<div class="a td" style="right:368px;top:360.5px;color:#222;transform:scaleX(0.94);transform-origin:100% 50%;">37.86%</div>
<div class="a td" style="right:293px;top:360.5px;transform:scaleX(0.975);transform-origin:100% 50%;">$37,556</div>
<div class="a td" style="right:199px;top:360.5px;transform:scaleX(0.975);transform-origin:100% 50%;">$73,422</div>
<div class="a td" style="right:122px;top:360.5px;transform:scaleX(0.975);transform-origin:100% 50%;">$35,866</div>
<div class="a td" style="right:33px;top:360.5px;color:#fff;font-weight:700;transform:scaleX(0.95);transform-origin:100% 50%;">48.85%</div>
<div class="bx" style="left:33px;top:392px"></div>
<div class="a td" style="left:50px;top:392.5px;transform:scaleX(1.017);transform-origin:0 50%;">Tasty Tibs</div>
<div class="a td" style="right:1337px;top:392.5px;">69</div>
<div class="a td" style="left:276px;top:392.5px;transform:scaleX(0.994);transform-origin:0 50%;">Madeline Turner</div>
<div class="a td" style="left:417px;top:392.5px;transform:scaleX(1.012);transform-origin:0 50%;">Ethiopian</div>
<div class="bx" style="left:525px;top:392px"></div>
<div class="a td" style="left:542px;top:392.5px;transform:scaleX(0.97);transform-origin:0 50%;">Beverage</div>
<div class="bx" style="left:671px;top:392px"></div>
<div class="a td" style="left:688px;top:392.5px;">94</div>
<div class="a td" style="left:775px;top:392.5px;transform:scaleX(1.004);transform-origin:0 50%;">Bottled Water</div>
<div class="a td" style="right:599px;top:392.5px;transform:scaleX(0.95);transform-origin:100% 50%;">1,929</div>
<div class="a td" style="right:504px;top:392.5px;transform:scaleX(0.95);transform-origin:100% 50%;">2,138</div>
<div class="a td" style="right:368px;top:392.5px;color:#222;transform:scaleX(0.94);transform-origin:100% 50%;">4.23%</div>
<div class="a td" style="right:293px;top:392.5px;transform:scaleX(0.975);transform-origin:100% 50%;">$1,069</div>
<div class="a td" style="right:199px;top:392.5px;transform:scaleX(0.975);transform-origin:100% 50%;">$3,207</div>
<div class="a td" style="right:122px;top:392.5px;transform:scaleX(0.975);transform-origin:100% 50%;">$2,138</div>
<div class="a td" style="right:33px;top:392.5px;color:#222;transform:scaleX(0.94);transform-origin:100% 50%;">66.67%</div>
<div class="bx" style="left:671px;top:424px"></div>
<div class="a td" style="left:688px;top:424.5px;">95</div>
<div class="a td" style="left:775px;top:424.5px;transform:scaleX(0.993);transform-origin:0 50%;">Bottled Soda</div>
<div class="a td" style="right:599px;top:424.5px;transform:scaleX(0.95);transform-origin:100% 50%;">2,007</div>
<div class="a td" style="right:504px;top:424.5px;transform:scaleX(0.95);transform-origin:100% 50%;">2,221</div>
<div class="a td" style="right:368px;top:424.5px;color:#222;transform:scaleX(0.94);transform-origin:100% 50%;">6.30%</div>
<div class="a td" style="right:293px;top:424.5px;transform:scaleX(0.975);transform-origin:100% 50%;">$1,111</div>
<div class="a td" style="right:199px;top:424.5px;transform:scaleX(0.975);transform-origin:100% 50%;">$4,997</div>
<div class="a td" style="right:122px;top:424.5px;transform:scaleX(0.975);transform-origin:100% 50%;">$3,887</div>
<div class="a td" style="right:33px;top:424.5px;color:#222;transform:scaleX(0.94);transform-origin:100% 50%;">77.78%</div>
</div>
<div class="a" style="left:514px;top:137px;width:5px;height:482px;background:#d4d4d4;border-radius:2px 2px 0 0"></div>
<div class="a" style="left:660px;top:137px;width:5px;height:482px;background:#d4d4d4;border-radius:2px 2px 0 0"></div>
<div class="a" style="left:924px;top:139px;width:4px;height:480px;background:#e6e6e6"></div>
<div class="a" style="left:26px;top:619px;width:1546px;height:1px;background:#d9d9d9"></div>
<div class="a" style="left:39px;top:627px;font-size:11px;line-height:13px;color:#444;transform:scaleX(0.89);transform-origin:0 0">SUMMARY</div>
<svg class="a" style="left:99px;top:629px" width="10" height="7" viewBox="0 0 10 7"><path d="M1 6L5 2L9 6" fill="none" stroke="#555" stroke-width="1.2"/></svg>
<div class="a" style="left:118px;top:626px;font-size:13px;line-height:15px;color:#555;transform:scaleX(0.975);transform-origin:0 0">18 rows – 14 columns</div>
</div></body></html>
